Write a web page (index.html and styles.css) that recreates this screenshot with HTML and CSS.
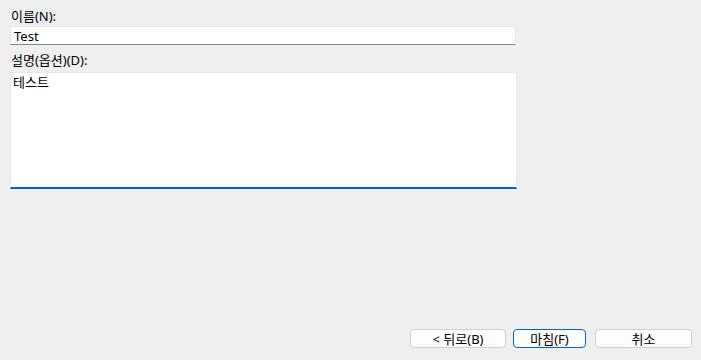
FILE: index.html
```html
<!DOCTYPE html>
<html lang="ko">
<head>
    <meta charset="UTF-8">
    <meta name="viewport" content="width=device-width, initial-scale=1.0">
    <title>이름 및 설명</title>
    <link rel="stylesheet" href="styles.css">
</head>
<body>
    <div class="dialog">
        <form class="fields">
            <label for="name" class="label-name">이름(N):</label>
            <input type="text" id="name" class="name-input" value="Test">

            <label for="desc" class="label-desc">설명(옵션)(D):</label>
            <textarea id="desc" class="desc-input">테스트</textarea>
        </form>

        <div class="buttons">
            <button type="button" class="btn btn-back">&lt; 뒤로(B)</button>
            <button type="button" class="btn btn-finish">마침(F)</button>
            <button type="button" class="btn btn-cancel">취소</button>
        </div>
    </div>
</body>
</html>
```

FILE: styles.css
```css
html, body {
    margin: 0;
    height: 100%;
}

body {
    background-color: #efefef;
    font-family: "Noto Sans", "Noto Sans CJK KR", sans-serif;
    font-size: 13px;
    color: #000000;
}

.dialog {
    display: flex;
    flex-direction: column;
    height: 100%;
    box-sizing: border-box;
    padding: 8px 0 12px 10px;
}

.fields {
    display: flex;
    flex-direction: column;
    width: 507px;
}

label {
    display: block;
    line-height: 16px;
    padding-left: 1px;
}

.name-input {
    width: 506px;
    height: 19px;
    margin: 2px 0 0 0;
    box-sizing: border-box;
    border: 1px solid #e6e6e6;
    border-bottom-color: #868686;
    background-color: #ffffff;
    padding: 0 3px;
    font: inherit;
    color: #000000;
    outline: none;
}

.label-desc {
    margin-top: 7px;
}

.desc-input {
    width: 507px;
    height: 117px;
    margin: 4px 0 0 0;
    box-sizing: border-box;
    border: 1px solid #e6e8ee;
    border-bottom: 2px solid #0067c0;
    background-color: #ffffff;
    padding: 1px 2px;
    font: inherit;
    line-height: 16px;
    color: #000000;
    resize: none;
    outline: none;
}

.buttons {
    display: flex;
    margin-top: auto;
    padding-left: 400px;
}

.btn {
    height: 19px;
    box-sizing: border-box;
    padding: 0;
    border: 1px solid #d0d0d0;
    border-radius: 4px;
    background-color: #fdfdfd;
    font: inherit;
    line-height: 16px;
    color: #000000;
}

.btn-back {
    width: 96px;
}

.btn-finish {
    width: 73px;
    margin-left: 7px;
    border-color: #0067c0;
}

.btn-cancel {
    width: 97px;
    margin-left: 9px;
}
```
